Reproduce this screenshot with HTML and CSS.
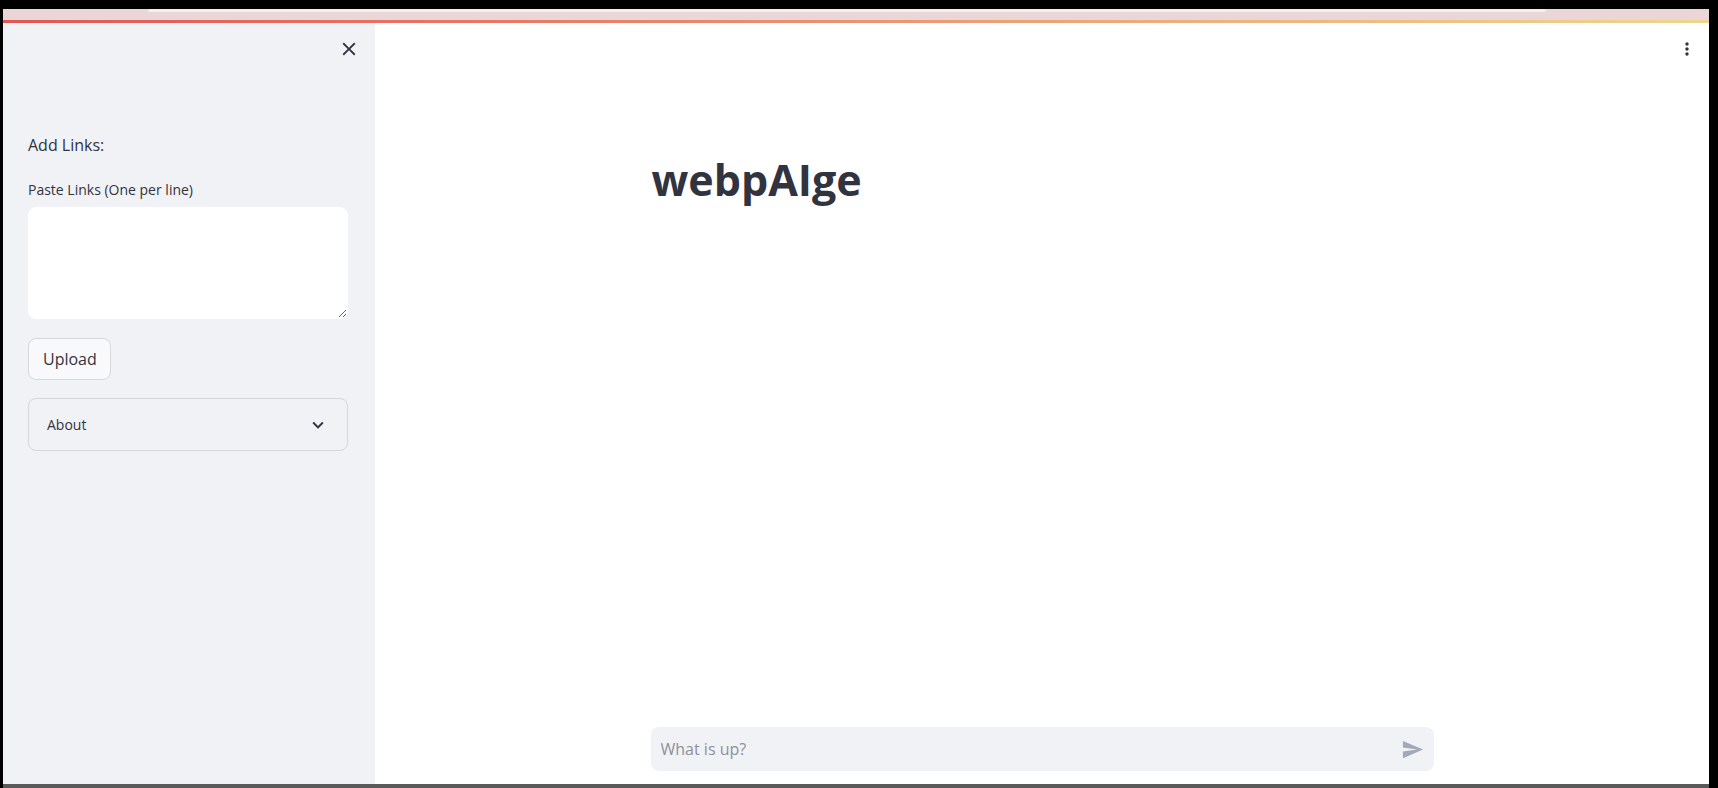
FILE: index.html
```html
<!DOCTYPE html>
<html lang="en">
<head>
<meta charset="utf-8">
<title>webpAIge</title>
<link rel="stylesheet" href="styles.css">
</head>
<body>
<div class="screen">
  <div class="tabstrip"></div>
  <div class="tabband"></div>
  <div class="decoration"></div>
  <div class="app">
    <aside class="sidebar">
      <div class="sidebar-top">
        <button class="icon-btn close-btn" aria-label="Close sidebar">
          <svg viewBox="0 0 24 24" width="22" height="22"><path d="M19 6.41L17.59 5 12 10.59 6.41 5 5 6.41 10.59 12 5 17.59 6.41 19 12 13.41 17.59 19 19 17.59 13.41 12z" fill="currentColor"/></svg>
        </button>
      </div>
      <p class="section-label">Add Links:</p>
      <label class="field-label" for="links">Paste Links (One per line)</label>
      <textarea id="links" class="links-input"></textarea>
      <div class="btn-row"><button class="upload-btn">Upload</button></div>
      <div class="expander">
        <span class="expander-label">About</span>
        <svg viewBox="0 0 24 24" width="22" height="22"><path d="M16.59 8.59L12 13.17 7.41 8.59 6 10l6 6 6-6z" fill="currentColor"/></svg>
      </div>
    </aside>
    <main class="main">
      <header class="main-header">
        <button class="icon-btn menu-btn" aria-label="Main menu">
          <svg viewBox="0 0 24 24" width="20" height="20"><path d="M12 8c1.1 0 2-.9 2-2s-.9-2-2-2-2 .9-2 2 .9 2 2 2zm0 2c-1.1 0-2 .9-2 2s.9 2 2 2 2-.9 2-2-.9-2-2-2zm0 6c-1.1 0-2 .9-2 2s.9 2 2 2 2-.9 2-2-.9-2-2-2z" fill="currentColor"/></svg>
        </button>
      </header>
      <section class="content">
        <h1 class="title">webpAIge</h1>
      </section>
      <div class="chat-bar">
        <div class="chat-input">
          <input type="text" placeholder="What is up?">
          <svg class="send" viewBox="0 0 24 24" width="23" height="23"><path d="M2.01 21L23 12 2.01 3 2 10l15 2-15 2z" fill="currentColor"/></svg>
        </div>
      </div>
    </main>
  </div>
  <div class="bottom-band"></div>
</div>
</body>
</html>
```

FILE: styles.css
```css
* { box-sizing: border-box; }

html, body {
  margin: 0;
  height: 100%;
  background: #000;
  overflow: hidden;
}

body {
  font-family: "Open Sans", "Liberation Sans", sans-serif;
  color: #31333f;
}

.screen {
  height: 788px;
  padding: 9px 9px 0 3px;
  display: flex;
  flex-direction: column;
}

.tabstrip {
  height: 3px;
  background: linear-gradient(to right, #ead6d6 0, #ead6d6 144px, #f6efef 147px, #f6efef 1541px, #ead6d6 1544px);
}

.tabband {
  height: 8px;
  background: #ead6d6;
}

.decoration {
  height: 3px;
  background: linear-gradient(90deg, #e25656 0%, #ea7f68 35%, #ecb07c 70%, #efd58c 100%);
}

.app {
  flex: 1;
  display: flex;
  min-height: 0;
  box-shadow: inset -1px 0 0 #d8ecd0;
}

.bottom-band {
  height: 4px;
  background: #5a5a5a;
}

/* Sidebar */
.sidebar {
  width: 372px;
  flex: none;
  background: #f0f2f6;
  padding: 0 27px 0 25px;
  display: flex;
  flex-direction: column;
}

.sidebar-top {
  height: 52px;
  display: flex;
  align-items: center;
  justify-content: flex-end;
  margin-right: -12px;
}

.icon-btn {
  border: 0;
  background: transparent;
  padding: 0;
  display: flex;
  align-items: center;
  justify-content: center;
  color: #31333f;
  cursor: pointer;
}

.section-label {
  margin: 58px 0 0;
  font-size: 16px;
  line-height: 24px;
}

.field-label {
  margin-top: 23px;
  font-size: 14px;
  line-height: 20px;
}

.links-input {
  margin-top: 7px;
  width: 320px;
  height: 112px;
  border: 1px solid #fff;
  border-radius: 8px;
  background: #fff;
  resize: vertical;
  font-family: inherit;
  font-size: 16px;
  padding: 12px;
  outline: none;
}

.btn-row {
  margin-top: 19px;
  display: flex;
}

.upload-btn {
  height: 42px;
  padding: 0 13px 0 14px;
  border: 1px solid #d7d8dc;
  border-radius: 8px;
  background: #f9f9fb;
  font-family: inherit;
  font-size: 16px;
  color: #31333f;
}

.expander {
  margin-top: 18px;
  height: 53px;
  border: 1px solid #d5d7dc;
  border-radius: 8px;
  display: flex;
  align-items: center;
  justify-content: space-between;
  padding: 0 18px 0 18px;
  font-size: 14px;
  color: #31333f;
}

/* Main */
.main {
  flex: 1;
  background: #fff;
  display: flex;
  flex-direction: column;
  min-width: 0;
}

.main-header {
  height: 51px;
  display: flex;
  align-items: center;
  justify-content: flex-end;
  padding-right: 12px;
}

.content {
  flex: 1;
  width: 783px;
  margin: 0 auto;
}

.title {
  margin: 80px 0 0 1px;
  font-size: 43px;
  font-weight: 700;
  line-height: 1.2;
  color: #31333f;
  letter-spacing: 0;
}

.chat-bar {
  width: 783px;
  margin: 0 auto 13px;
}

.chat-input {
  height: 44px;
  border-radius: 8px;
  background: #f0f2f6;
  display: flex;
  align-items: center;
  padding: 0 10px 0 10px;
}

.chat-input input {
  flex: 1;
  border: 0;
  background: transparent;
  font-family: inherit;
  font-size: 16px;
  color: #31333f;
  outline: none;
  padding: 0;
}

.chat-input input::placeholder {
  color: #8e9099;
}

.send {
  color: #a3a8b8;
  flex: none;
}
```
